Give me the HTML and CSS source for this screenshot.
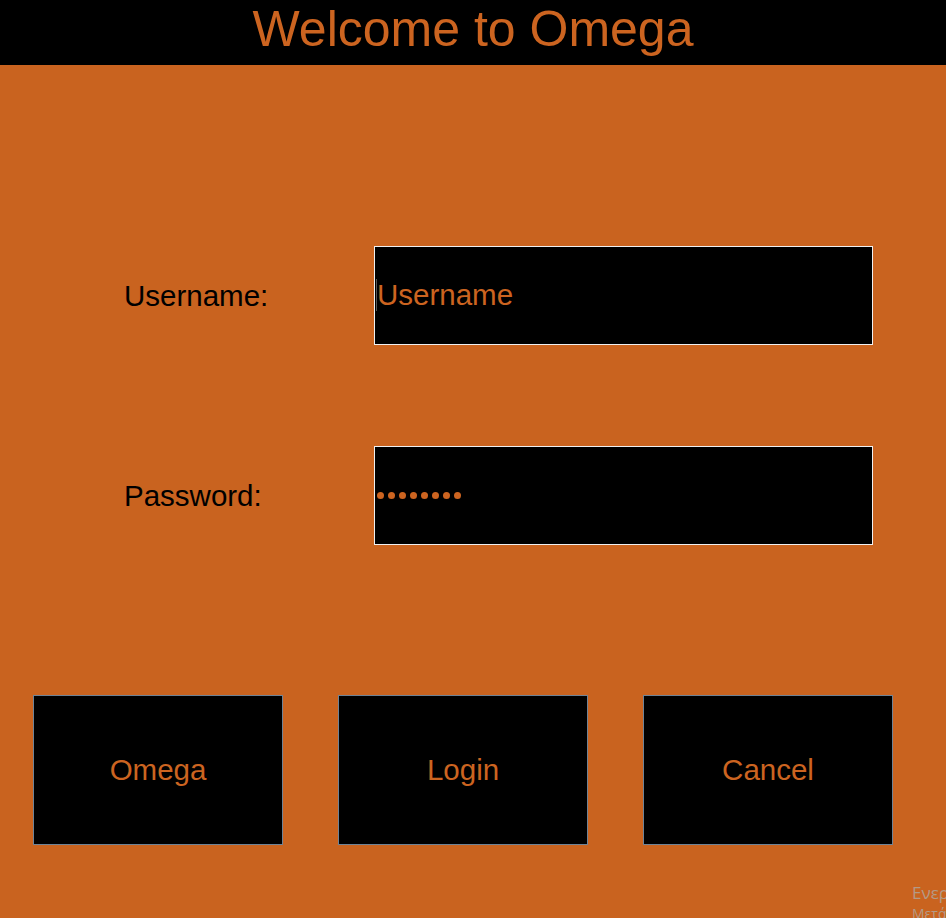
FILE: index.html
```html
<!DOCTYPE html>
<html lang="en">
<head>
<meta charset="utf-8">
<title>Welcome to Omega</title>
<link rel="stylesheet" href="styles.css">
</head>
<body>
<div class="window">
  <header class="header">
    <h1 class="title">Welcome to Omega</h1>
  </header>
  <main class="form">
    <div class="row row-user">
      <label class="label">Username:</label>
      <div class="field"><span class="caret"></span><span class="field-text">Username</span></div>
    </div>
    <div class="row row-pass">
      <label class="label">Password:</label>
      <div class="field">
        <span class="dots">
          <span class="dot"></span><span class="dot"></span><span class="dot"></span><span class="dot"></span><span class="dot"></span><span class="dot"></span><span class="dot"></span><span class="dot"></span>
        </span>
      </div>
    </div>
    <div class="buttons">
      <button class="btn">Omega</button>
      <button class="btn">Login</button>
      <button class="btn">Cancel</button>
    </div>
  </main>
  <div class="watermark">
    <div class="wm-1">Ενεργοποίηση των Windows</div>
    <div class="wm-2">Μετάβαση στις Ρυθμίσεις για ενεργοποίηση των Windows.</div>
  </div>
</div>
</body>
</html>
```

FILE: styles.css
```css
html, body {
  margin: 0;
  padding: 0;
}
body {
  background: #c9631f;
  font-family: "Liberation Sans", Arial, sans-serif;
  overflow: hidden;
}
.window {
  position: relative;
  width: 946px;
  height: 918px;
  overflow: hidden;
  background: #c9631f;
}
.header {
  height: 65px;
  background: #000;
}
.title {
  margin: 0;
  font-size: 50px;
  font-weight: normal;
  line-height: 58px;
  text-align: center;
  color: #cc6420;
}
.form {
  display: flex;
  flex-direction: column;
  padding-top: 181px;
}
.row {
  display: flex;
  align-items: center;
  padding-left: 124px;
  height: 99px;
}
.row-pass {
  margin-top: 101px;
}
.label {
  width: 250px;
  font-size: 29.5px;
  color: #000;
}
.field {
  box-sizing: border-box;
  width: 499px;
  height: 99px;
  border: 1px solid #f0f0f0;
  background: #000;
  display: flex;
  align-items: center;
  padding-left: 0;
  padding-bottom: 2px;
}
.caret {
  width: 1px;
  height: 32px;
  background: #555;
  margin-left: 1px;
}
.field-text {
  font-size: 29.5px;
  color: #cc6420;
}
.dots {
  display: flex;
  gap: 4px;
  padding-left: 2px;
  padding-top: 1px;
}
.dot {
  width: 7px;
  height: 7px;
  border-radius: 50%;
  background: #cc6420;
}
.buttons {
  display: flex;
  gap: 55px;
  padding-left: 33px;
  margin-top: 150px;
}
.btn {
  box-sizing: border-box;
  width: 250px;
  height: 150px;
  background: #000;
  border: 1px solid #6f8396;
  color: #cc6420;
  font-family: "Liberation Sans", Arial, sans-serif;
  font-size: 29.5px;
  padding: 0;
  margin: 0;
}
.watermark {
  position: absolute;
  left: 912px;
  top: 882px;
  white-space: nowrap;
  font-family: "Open Sans", "Noto Sans", sans-serif;
  color: #b49a86;
}
.wm-1 {
  font-size: 17px;
  line-height: 22px;
}
.wm-2 {
  font-size: 14px;
  line-height: 20px;
}
```
